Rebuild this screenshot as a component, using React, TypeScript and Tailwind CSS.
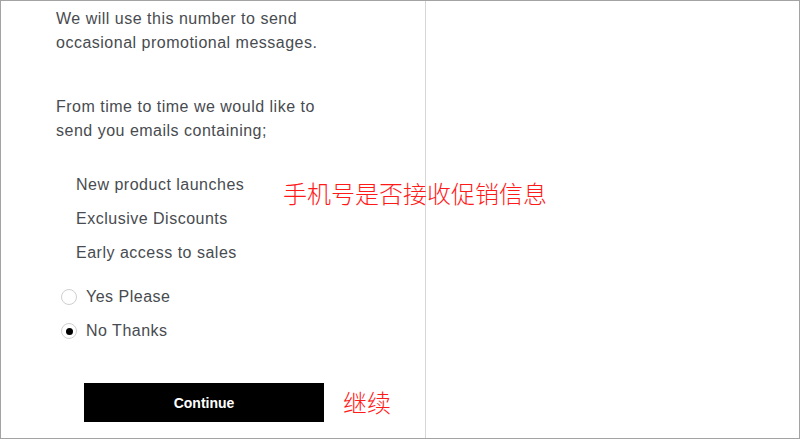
import React from 'react'

const perks = ['New product launches', 'Exclusive Discounts', 'Early access to sales']

function Radio({ checked }: { checked?: boolean }) {
    return (
        <span className="w-[16px] h-[16px] rounded-full border-[1.5px] border-[#cfcfcf] bg-white flex items-center justify-center">
            {checked && <span className="w-[7px] h-[7px] rounded-full bg-black" />}
        </span>
    )
}

export default function App() {
    return (
        <div className="relative w-[800px] h-[439px] border border-[#a3a3a3] bg-white flex overflow-hidden font-['Liberation_Sans',Arial,sans-serif] text-[16px] leading-[24px] tracking-[0.5px] text-[#484b50]">
            <div className="w-[425px] h-full border-r border-[#d6d6d6] pl-[55px] pt-[6px] flex flex-col">
                <p>We will use this number to send<br />occasional promotional messages.</p>
                <p className="mt-[40px]">From time to time we would like to<br />send you emails containing;</p>

                <ul className="mt-[30px] pl-[20px] flex flex-col gap-[10px]">
                    {perks.map((p) => (
                        <li key={p}>{p}</li>
                    ))}
                </ul>

                <div className="mt-[20px] pl-[5px] flex flex-col gap-[10px]">
                    <label className="flex items-center gap-[9px]">
                        <Radio />
                        <span>Yes Please</span>
                    </label>
                    <label className="flex items-center gap-[9px]">
                        <Radio checked />
                        <span>No Thanks</span>
                    </label>
                </div>

                <div className="mt-[40px] pl-[28px] flex items-center">
                    <button className="w-[240px] h-[39px] bg-black text-white font-bold text-[14px] tracking-normal">Continue</button>
                </div>
            </div>
            <div className="flex-1" />

            {/* annotations */}
            <span className="absolute left-[282px] top-[176px] text-[24px] leading-[32px] tracking-normal text-[#ff1a1a] font-light font-['Noto_Sans_CJK_SC',sans-serif]">
                手机号是否接收促销信息
            </span>
            <span className="absolute left-[342px] top-[385px] text-[24px] leading-[32px] tracking-normal text-[#ff1a1a] font-light font-['Noto_Sans_CJK_SC',sans-serif]">
                继续
            </span>
        </div>
    )
}
